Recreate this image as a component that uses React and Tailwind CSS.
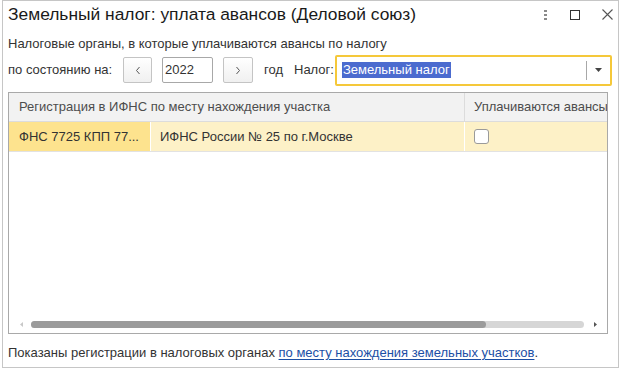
import React from "react";

export default function App() {
  const f = { fontFamily: '"Liberation Sans", Arial, sans-serif' };
  return (
    <div className="w-[620px] h-[369px] bg-white overflow-hidden" style={f}>
      <div className="ml-[2px] w-[617px] h-[368px] border border-[#c6c6c6] flex flex-col bg-white">
        {/* title */}
        <div className="h-[29px] pb-[2px] flex items-center pl-[5px] pr-[4px] shrink-0">
          <div className="text-[17.4px] text-[#1a1a1a] leading-none flex-1">
            Земельный налог: уплата авансов (Деловой союз)
          </div>
          <div className="flex items-center">
            <div className="flex flex-col gap-[2px] w-[4px] items-center mr-[23px]">
              <span className="w-[3px] h-[2px] bg-[#8a8a8a]"></span>
              <span className="w-[3px] h-[2px] bg-[#8a8a8a]"></span>
              <span className="w-[3px] h-[2px] bg-[#8a8a8a]"></span>
            </div>
            <div className="w-[10px] h-[10px] border border-[#333] mr-[22px]"></div>
            <svg width="11" height="11" viewBox="0 0 11 11" className="mr-[1px]">
              <path d="M0.5 0.5 L10.5 10.5 M10.5 0.5 L0.5 10.5" stroke="#555" strokeWidth="1.1" />
            </svg>
          </div>
        </div>
        {/* description */}
        <div className="h-[24px] pt-[4px] flex items-center pl-[5px] text-[13px] text-[#333] shrink-0">
          Налоговые органы, в которые уплачиваются авансы по налогу
        </div>
        {/* row controls */}
        <div className="h-[32px] flex items-center pl-[5px] text-[13px] text-[#333] shrink-0">
          <span className="w-[115px]">по состоянию на:</span>
          <button className="w-[29px] h-[26px] border border-[#c4c4c4] rounded-[2px] bg-gradient-to-b from-white to-[#f0f0f0] flex items-center justify-center text-[#444] text-[12px]">
            <svg width="6" height="9" viewBox="0 0 6 9"><path d="M4.5 1 L1.5 4.5 L4.5 8" fill="none" stroke="#555" strokeWidth="1" /></svg>
          </button>
          <div className="ml-[10px] w-[51px] h-[26px] border border-[#a8a8a8] rounded-[2px] flex items-center pl-[2px] text-[13px] text-[#333]">
            2022
          </div>
          <button className="ml-[10px] w-[30px] h-[26px] border border-[#c4c4c4] rounded-[2px] bg-gradient-to-b from-white to-[#f0f0f0] flex items-center justify-center">
            <svg width="6" height="9" viewBox="0 0 6 9"><path d="M1.5 1 L4.5 4.5 L1.5 8" fill="none" stroke="#555" strokeWidth="1" /></svg>
          </button>
          <span className="ml-[11px]">год</span>
          <span className="ml-[11px]">Налог:</span>
          <div className="ml-[1px] w-[277px] h-[31px] border-2 border-[#f5c83a] rounded-[2px] flex items-center">
            <div className="flex-1 pl-[5px] flex items-center">
              <span className="bg-[#4b6bcf] text-white px-[1px] leading-[16px] text-[13px]">Земельный налог</span>
            </div>
            <div className="w-px h-[19px] bg-[#a8a8a8]"></div>
            <div className="w-[23px] flex items-center justify-center">
              <svg width="7" height="4" viewBox="0 0 7 4"><path d="M0 0 L7 0 L3.5 4 Z" fill="#444" /></svg>
            </div>
          </div>
        </div>
        {/* table */}
        <div className="mt-[6px] ml-[5px] w-[600px] h-[242px] border border-[#a9a9a9] flex flex-col shrink-0 text-[13px]">
          <div className="h-[29px] flex bg-[#f2f2f2] border-b border-[#dcdcdc] text-[#4d4d4d]">
            <div className="w-[456px] pl-[10px] flex items-center border-r border-[#dcdcdc]">
              Регистрация в ИФНС по месту нахождения участка
            </div>
            <div className="flex-1 pl-[9px] flex items-center whitespace-nowrap overflow-hidden">
              Уплачиваются авансы
            </div>
          </div>
          <div className="h-[30px] flex bg-[#fdf1c7] border-b border-[#e2e2e2] text-[#333]">
            <div className="w-[142px] bg-[#fde38e] pl-[10px] flex items-center border-r border-white">
              ФНС 7725 КПП 77...
            </div>
            <div className="w-[314px] pl-[9px] flex items-center border-r border-white">
              ИФНС России № 25 по г.Москве
            </div>
            <div className="flex-1 pl-[9px] flex items-center">
              <div className="w-[15px] h-[15px] border border-[#9a9a9a] rounded-[3px] bg-white"></div>
            </div>
          </div>
          <div className="flex-1"></div>
          <div className="h-[14px] flex items-center mb-[2px]">
            <div className="w-[22px] flex justify-center pl-[2px]">
              <svg width="3" height="5" viewBox="0 0 3 5"><path d="M3 0 L0 2.5 L3 5 Z" fill="#c8c8c8" /></svg>
            </div>
            <div className="w-[553px] h-[7px] rounded-full bg-[#d6d6d6] flex">
              <div className="w-[455px] h-[7px] rounded-full bg-[#9b9b9b]"></div>
            </div>
            <div className="flex-1 flex justify-center">
              <svg width="3" height="5" viewBox="0 0 3 5"><path d="M0 0 L3 2.5 L0 5 Z" fill="#555" /></svg>
            </div>
          </div>
        </div>
        {/* footer */}
        <div className="flex-1 flex items-center pl-[5px] pt-[4px] text-[13px] text-[#333]">
          <span>
            Показаны регистрации в налоговых органах{" "}
            <span className="text-[#1c4fa5] underline underline-offset-2">по месту нахождения земельных участков</span>.
          </span>
        </div>
      </div>
    </div>
  );
}
